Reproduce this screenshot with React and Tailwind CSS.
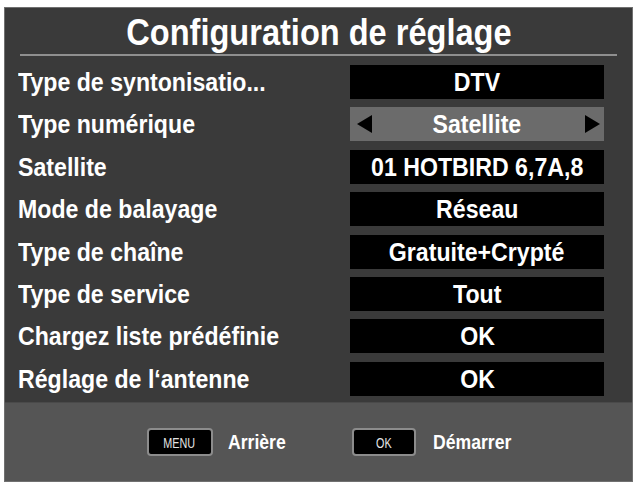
import React from "react";

const rows = [
  { label: "Type de syntonisatio...", value: "DTV" },
  { label: "Type numérique", value: "Satellite", selected: true },
  { label: "Satellite", value: "01 HOTBIRD 6,7A,8" },
  { label: "Mode de balayage", value: "Réseau" },
  { label: "Type de chaîne", value: "Gratuite+Crypté" },
  { label: "Type de service", value: "Tout" },
  { label: "Chargez liste prédéfinie", value: "OK" },
  { label: "Réglage de l‘antenne", value: "OK" },
];

const font = { fontFamily: '"Liberation Sans", Arial, sans-serif' };

export default function App() {
  return (
    <div className="w-[640px] h-[487px] bg-white pt-[7px] pl-[4px]" style={font}>
      <div className="w-[629px] h-[475px] flex flex-col bg-[#3a3a3a] border border-[#707070]">
        <div className="flex-1 flex flex-col">
          <div className="h-[46px] flex items-center justify-center text-white font-bold text-[37px] leading-none pt-[2px] whitespace-nowrap">
            <span className="inline-block origin-center scale-x-[0.88]">Configuration de réglage</span>
          </div>
          <div className="mx-[15px] h-[2px] bg-[#8f8f8f]" />
          <div className="flex flex-col gap-[8.4px] mt-[9px]">
            {rows.map((r, i) => (
              <div key={i} className="flex items-center h-[34px]">
                <div className="pl-[13px] w-[345px] text-white font-bold text-[26px] leading-none whitespace-nowrap">
                  <span className="inline-block origin-left scale-x-[0.89]">{r.label}</span>
                </div>
                <div
                  className={
                    "relative w-[254px] h-[34px] flex items-center justify-center text-white font-bold text-[26px] leading-none " +
                    (r.selected ? "bg-[#6b6b6b]" : "bg-black")
                  }
                >
                  {r.selected && (
                    <svg className="absolute left-[7px] top-[8px]" width="15" height="18" viewBox="0 0 15 18">
                      <polygon points="15,0 15,18 0,9" fill="#000" />
                    </svg>
                  )}
                  <span className="inline-block origin-center scale-x-[0.89] whitespace-nowrap">{r.value}</span>
                  {r.selected && (
                    <svg className="absolute right-[4px] top-[8px]" width="15" height="18" viewBox="0 0 15 18">
                      <polygon points="0,0 0,18 15,9" fill="#000" />
                    </svg>
                  )}
                </div>
              </div>
            ))}
          </div>
        </div>
        <div className="h-[79px] bg-[#555555] flex items-center justify-center pl-[20px] border-t border-[#4a4a4a]">
          <div className="w-[66px] h-[28px] bg-black rounded-[4px] border-2 border-[#8c8c8c] flex items-center justify-center text-[#e4e4e4] text-[15px] leading-none">
            <span className="inline-block origin-center scale-x-[0.72]">MENU</span>
          </div>
          <div className="w-[57px] ml-[15px] text-white font-bold text-[20px] leading-none whitespace-nowrap">
            <span className="inline-block origin-left scale-x-[0.88]">Arrière</span>
          </div>
          <div className="w-[64px] ml-[67px] h-[28px] bg-black rounded-[4px] border-2 border-[#8c8c8c] flex items-center justify-center text-[#e4e4e4] text-[15px] leading-none">
            <span className="inline-block origin-center scale-x-[0.72]">OK</span>
          </div>
          <div className="w-[78px] ml-[17px] text-white font-bold text-[20px] leading-none whitespace-nowrap">
            <span className="inline-block origin-left scale-x-[0.88]">Démarrer</span>
          </div>
        </div>
      </div>
    </div>
  );
}
